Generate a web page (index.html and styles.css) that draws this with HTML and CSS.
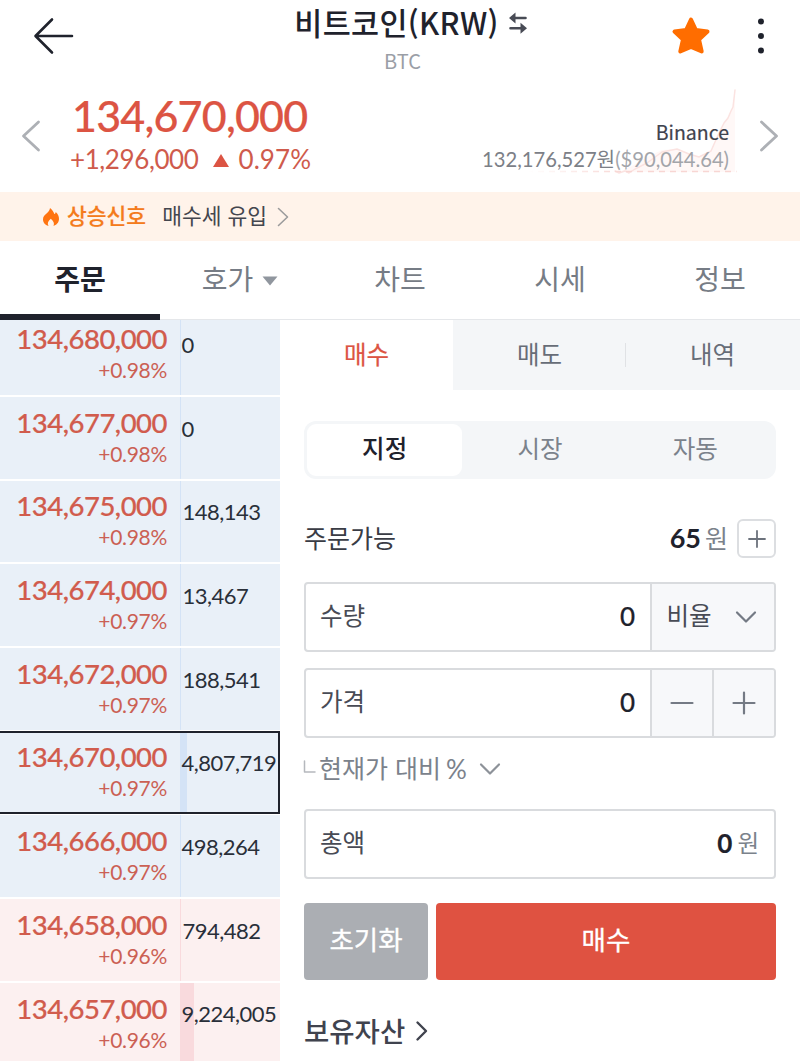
FILE: index.html
```
<!DOCTYPE html>
<html lang="ko">
<head>
<meta charset="utf-8">
<title>비트코인(KRW)</title>
<link rel="stylesheet" href="styles.css">
</head>
<body>
<div class="app">
  <header class="topbar">
    <svg class="back" width="40" height="36" viewBox="0 0 40 36"><path d="M18 1.500 1.500 18l16.500 16.500M2 18H38"/></svg>
    <div class="heading">
      <h1 class="title"><span>비트코인(KRW)</span><svg class="swap" width="18" height="22" viewBox="0 0 18 22"><path class="line" d="M5 6H16.500M1.500 16.300H13"/><path class="tip" d="M0 6 6.500.500V11.500ZM18 16.300 11.500 10.800V21.800Z"/></svg></h1>
      <div class="symbol">BTC</div>
    </div>
    <div class="actions">
      <svg width="38" height="38" viewBox="0 0 38 38"><path class="star" d="M19 2.500 23.900 13.100 35.500 14.500 27 22.500 29.700 34.500 19 30 8.300 34.500 11 22.500 2.500 14.500 14.100 13.100Z"/></svg>
      <svg width="8" height="38" viewBox="0 0 8 38"><circle cx="4" cy="4.500" r="3"/><circle cx="4" cy="19" r="3"/><circle cx="4" cy="33.500" r="3"/></svg>
    </div>
  </header>

  <section class="quote">
    <svg class="prev" width="20" height="32" viewBox="0 0 20 32"><path d="M17.500 2 2.500 16l15 14"/></svg>
    <div class="now">
      <div class="now-price">134,670,000</div>
      <div class="now-change"><span>+1,296,000</span><svg width="16" height="13" viewBox="0 0 16 13"><path d="M8 0 16 13H0Z"/></svg><span>0.97%</span></div>
    </div>
    <div class="world">
      <svg class="spark" width="230" height="90" viewBox="0 0 230 90"><defs><linearGradient id="fade" gradientUnits="userSpaceOnUse" x1="20" y1="0" x2="120" y2="0"><stop offset="0" stop-color="#f8d6d3" stop-opacity="0"/><stop offset="1" stop-color="#f8d6d3"/></linearGradient></defs><path class="area" d="M112 83 125 77 140 68 155 61 170 60 182 65 192 68 204 62 208 53 213 42 217 34 221 29 224 22 226 18 228 1V83Z"/><path class="curve" d="M108 82 112 84 118 82 122 84 128 80 140 74 155 63 170 60 182 65 192 68 204 62 208 53 213 42 217 34 221 29 224 22 226 18 228 1"/><path class="base" d="M20 82.500H229.500"/></svg>
      <div class="world-name">Binance</div>
      <div class="world-price">132,176,527원<span>($90,044.64)</span></div>
    </div>
    <svg class="next" width="20" height="32" viewBox="0 0 20 32"><path d="M2.500 2l15 14-15 14"/></svg>
  </section>

  <div class="signal">
    <svg class="fire" width="18" height="18" viewBox="0 0 18 18"><path d="M8 0C10 1.500 11.600 3.500 12.300 6 13.300 5.600 13.700 4.800 13.700 4 16 6 17 8.400 17 11 17 14.800 14 17.200 11.500 18 12.700 15.500 11.500 13 8.800 10.800 6 13 5 15.500 6.500 18 3 17.200 1 14.500 1 11.300 1 8.200 3 7 4.800 5.200 6.800 3.400 7.700 2 8 0Z"/></svg>
    <strong>상승신호</strong>
    <span>매수세 유입</span>
    <svg class="more" width="12" height="20" viewBox="0 0 12 20"><path d="M1.500 1.500l9 8.500-9 8.500"/></svg>
  </div>

  <nav class="tabs">
    <a class="tab on"><span>주문</span></a>
    <a class="tab"><span>호가</span><svg width="16" height="10" viewBox="0 0 16 10"><path d="M.500.500H15.500L8 9.500Z"/></svg></a>
    <a class="tab"><span>차트</span></a>
    <a class="tab"><span>시세</span></a>
    <a class="tab"><span>정보</span></a>
  </nav>

  <main class="body">
    <div class="book">
      <div class="row first"><div class="ask"><b>134,680,000</b><i>+0.98%</i></div><div class="vol zero">0</div></div>
      <div class="row"><div class="ask"><b>134,677,000</b><i>+0.98%</i></div><div class="vol zero">0</div></div>
      <div class="row"><div class="ask"><b>134,675,000</b><i>+0.98%</i></div><div class="vol">148,143</div></div>
      <div class="row"><div class="ask"><b>134,674,000</b><i>+0.97%</i></div><div class="vol">13,467</div></div>
      <div class="row"><div class="ask"><b>134,672,000</b><i>+0.97%</i></div><div class="vol">188,541</div></div>
      <div class="row current"><div class="ask"><b>134,670,000</b><i>+0.97%</i></div><div class="vol wide" style="--depth:7px">4,807,719</div></div>
      <div class="row"><div class="ask"><b>134,666,000</b><i>+0.97%</i></div><div class="vol wide">498,264</div></div>
      <div class="row bid"><div class="ask"><b>134,658,000</b><i>+0.96%</i></div><div class="vol">794,482</div></div>
      <div class="row bid"><div class="ask"><b>134,657,000</b><i>+0.96%</i></div><div class="vol wide" style="--depth:14px">9,224,005</div></div>
    </div>

    <section class="trade">
      <div class="sides">
        <a class="side on">매수</a>
        <a class="side split">매도</a>
        <a class="side">내역</a>
      </div>
      <div class="form">
        <div class="kinds"><a class="kind on">지정</a><a class="kind">시장</a><a class="kind">자동</a></div>
        <div class="avail">
          <span class="avail-label">주문가능</span>
          <b>65</b><span class="unit">원</span>
          <button class="add"><svg width="16" height="16" viewBox="0 0 16 16"><path d="M8 0V16M0 8H16"/></svg></button>
        </div>
        <div class="field">
          <div class="entry"><label>수량</label><b>0</b></div>
          <div class="side-box ratio"><span>비율</span><svg width="20" height="13" viewBox="0 0 20 13"><path d="M1 1.500l9 9 9-9"/></svg></div>
        </div>
        <div class="field">
          <div class="entry"><label>가격</label><b>0</b></div>
          <div class="side-box step"><svg width="24" height="24" viewBox="0 0 24 24"><path d="M1.500 12H22.500"/></svg></div>
          <div class="side-box step"><svg width="24" height="24" viewBox="0 0 24 24"><path d="M1.500 12H22.500M12 1.500V22.500"/></svg></div>
        </div>
        <div class="percent"><svg class="branch" width="12" height="12" viewBox="0 0 12 12"><path d="M.500 0V11H11"/></svg><span>현재가 대비</span><em>%</em><svg class="down" width="20" height="13" viewBox="0 0 20 13"><path d="M1 1.500l9 9 9-9"/></svg></div>
        <div class="field">
          <div class="entry total"><label>총액</label><b>0</b><span class="unit">원</span></div>
        </div>
        <div class="buttons"><button class="reset">초기화</button><button class="buy">매수</button></div>
        <div class="assets"><span>보유자산</span><svg width="12" height="20" viewBox="0 0 12 20"><path d="M1.500 1.500l8.500 8.500-8.500 8.500"/></svg></div>
      </div>
    </section>
  </main>
</div>
</body>
</html>
```

FILE: styles.css
```
* { box-sizing: border-box; margin: 0; padding: 0; }
body { background: #fff; color: #1f222c; font-family: Lato, "Noto Sans CJK KR", sans-serif; }
svg { flex: none; display: block; fill: none; stroke-linecap: round; stroke-linejoin: round; overflow: visible; }
button { border: 0; font-family: inherit; }
.app { width: 800px; height: 1061px; overflow: hidden; display: flex; flex-direction: column; }

.topbar { height: 88px; display: grid; grid-template-columns: 160px 1fr 160px; flex: none; }
.back { margin: 18px 0 0 34px; stroke: #1f222c; stroke-width: 2.6; }
.heading { display: flex; flex-direction: column; align-items: center; }
.title { display: flex; align-items: center; gap: 10px; height: 44px; padding-left: 21px; font: 500 30.500px/44px "Noto Sans CJK KR", sans-serif; letter-spacing: .3px; white-space: nowrap; }
.swap { margin-top: 2px; }
.swap .line { stroke: #484b55; stroke-width: 2.6; }
.swap .tip { fill: #484b55; }
.symbol { font: 400 20px/34px "Noto Sans CJK KR", sans-serif; color: #9a9ea6; padding-left: 5px; }
.actions { display: flex; gap: 47px; padding: 17px 0 0 32px; }
.actions circle { fill: #1f222c; }
.star { fill: #ff6d00; stroke: #ff6d00; stroke-width: 4; }

.quote { height: 104px; flex: none; display: flex; }
.prev, .next { stroke: #adb0b5; stroke-width: 2.800; margin-top: 32px; }
.prev { margin-left: 21px; }
.next { margin: 32px 21px 0 22px; }
.now { margin-left: 31px; width: 260px; color: #dc5443; }
.now-price { font-size: 43px; font-weight: 500; line-height: 55px; letter-spacing: -.8px; -webkit-text-stroke: .2px #dc5443; white-space: nowrap; }
.now-change { display: flex; align-items: center; font-size: 26px; line-height: 32px; color: #cf5b4c; margin: 0 0 0 -2px; letter-spacing: -.4px; white-space: nowrap; }
.now-change svg { fill: #dc5443; margin: 2px 9px 0 15px; }
.now-change span:last-child { letter-spacing: .1px; }
.world { position: relative; flex: 1; padding: 30px 8px 0 0; text-align: right; font-family: "Noto Sans CJK KR", sans-serif; }
.spark { position: absolute; right: 0; top: 1px; }
.spark .area { fill: #fff8f7; }
.spark .curve { stroke: #fbe3e1; stroke-width: 1.5; }
.spark .base { stroke: url(#fade); stroke-width: 1.5; stroke-dasharray: 6 5; stroke-linecap: butt; }
.world-name { position: relative; font-size: 19.500px; line-height: 28px; color: #40434e; -webkit-text-stroke: .2px #40434e; }
.world-price { position: relative; font-family: Lato, "Noto Sans CJK KR", sans-serif; font-size: 20.200px; line-height: 26px; color: #7c8087; white-space: nowrap; }
.world-price span { color: #a3a5aa; }

.signal { height: 49px; flex: none; background: #fff3ea; display: flex; align-items: center; padding-left: 42px; font: 400 21.500px/45px "Noto Sans CJK KR", sans-serif; color: #44464e; }
.signal strong, .signal span { padding-bottom: 4px; }
.fire { fill: #ff7411; }
.signal strong { font-weight: 500; color: #f47b1c; -webkit-text-stroke: .2px #f47b1c; margin: 0 16px 0 7px; }
.more { margin-left: 10px; stroke: #9b9b9c; stroke-width: 1.600; }

.tabs { height: 79px; flex: none; border-bottom: 1px solid #e5e7ea; display: grid; grid-template-columns: repeat(5, 1fr); font: 400 28px/74px "Noto Sans CJK KR", sans-serif; color: #767c85; }
.tab { display: flex; justify-content: center; align-items: center; height: 79px; }
.tab span { padding-bottom: 5px; }
.tab.on { font-weight: 700; color: #1f222c; border-bottom: 6px solid #1f222c; padding-top: 6px; }
.tab svg { margin: 0 0 0 9px; fill: #90969e; }

.body { flex: 1; display: flex; min-height: 0; }
.book { width: 280px; flex: none; overflow: hidden; }
.row { height: 81.700px; margin-bottom: 2px; background: #e9f0f8; display: flex; align-items: flex-end; }
.row.first { height: 75px; }
.ask { width: 180px; height: 75px; padding-right: 13px; text-align: right; display: flex; flex-direction: column; }
.ask b { font-weight: 500; font-size: 27.500px; line-height: 38px; letter-spacing: -.5px; color: #d15c4d; -webkit-text-stroke: .2px #d15c4d; }
.ask i { font-style: normal; font-size: 21px; line-height: 24px; letter-spacing: -.3px; color: #cb6054; }
.row.first .vol { height: 75px; padding-top: 9px; }
.vol { --depth: 1px; width: 100px; align-self: stretch; padding: 15.500px 0 0 2.500px; font-size: 22px; line-height: 32px; letter-spacing: -.5px; color: #292f39; background: linear-gradient(#d4e3f6, #d4e3f6) left / var(--depth) 100% no-repeat; white-space: nowrap; }
.vol.zero, .vol.wide { padding-left: 1.500px; }
.row.current { position: relative; height: 83.700px; margin-top: -1px; margin-bottom: 1px; padding-bottom: 1px; }
.row.current .vol { padding-top: 16px; }
.row.current::after { content: ""; position: absolute; inset: 0 0 0 -2px; border: 2px solid #1f222c; }
.row.bid { background: #fcf0f0; }
.row.bid .vol { background-image: linear-gradient(#f9dadd, #f9dadd); }

.trade { flex: 1; font-family: "Noto Sans CJK KR", sans-serif; }
.sides { display: flex; height: 70px; background: #f4f6f8; font-size: 24.500px; line-height: 67px; text-align: center; color: #676d77; }
.side { width: 173px; }
.side.on { background: #fff; color: #dc5443; -webkit-text-stroke: .2px #dc5443; }
.side.split { background: linear-gradient(#e0e2e5, #e0e2e5) right 50% / 1px 24px no-repeat; }
.form { padding: 31px 24px 0; }
.kinds { display: flex; height: 58px; padding: 3px; border-radius: 12px; background: #f4f6f8; font-size: 24.500px; line-height: 48px; text-align: center; color: #7b828b; }
.kind { flex: 1; border-radius: 9px; }
.kind.on { background: #fff; color: #1f222c; font-weight: 500; }
.avail { height: 39px; margin-top: 40px; display: flex; align-items: center; font-size: 25px; line-height: 36px; }
.avail-label { margin-right: auto; color: #393c45; padding-bottom: 4px; }
.avail b, .entry b { font-family: Lato, sans-serif; font-weight: 700; font-size: 27px; letter-spacing: 0; color: #1f222c; padding-bottom: 2px; }
.unit { margin-left: 4px; color: #7b828b; font-size: 25px; padding-bottom: 4px; }
.add { width: 39px; height: 39px; margin-left: 9px; border: 2px solid #dcdee1; border-radius: 6px; background: #fff; display: grid; place-items: center; }
.add svg { stroke: #6c727c; stroke-width: 1.800; }
.field { display: flex; height: 70px; border: 2px solid #d9dbde; border-radius: 4px; margin-top: 16px; overflow: hidden; }
.avail + .field { margin-top: 24px; }
.entry { flex: 1; display: flex; align-items: center; padding: 0 15px 0 14px; font-size: 24.500px; line-height: 36px; }
.entry label { margin-right: auto; color: #484b55; padding-bottom: 4px; }
.entry b { font-size: 26px; font-weight: 500; -webkit-text-stroke: .2px #1f222c; }
.entry.total b { font-weight: 700; }
.entry.total .unit { font-size: 23.500px; margin-left: 5px; }
.side-box { border-left: 2px solid #d9dbde; background: #f7f8fa; display: flex; align-items: center; justify-content: center; width: 62px; color: #484b55; font-size: 24.500px; line-height: 36px; }
.side-box svg { stroke: #747a84; stroke-width: 2.200; }
.side-box.ratio { width: 124px; gap: 24px; padding-right: 4px; }
.side-box span { padding-bottom: 4px; }
.percent { height: 71px; display: flex; align-items: center; padding-bottom: 9px; font-size: 25px; line-height: 36px; color: #7b828b; }
.percent span { padding-bottom: 4px; }
.percent .branch { stroke: #b5b8bd; stroke-width: 1.500; margin: -4px 3px 0 0; }
.percent em { font-style: normal; font-family: Lato, sans-serif; margin-left: 5px; font-size: 26px; }
.percent .down { stroke: #8d9299; stroke-width: 2.200; margin-left: 13px; }
.percent + .field { margin-top: 0; }
.buttons { display: flex; gap: 8px; margin-top: 24px; height: 77px; }
.buttons button { border-radius: 4px; color: #fff; font-size: 26.500px; line-height: 72px; padding-bottom: 5px; -webkit-text-stroke: .3px #fff; }
.reset { width: 124px; background: #abaeb3; }
.buy { flex: 1; background: #df5241; }
.assets { display: flex; align-items: center; gap: 11px; height: 40px; margin-top: 31px; font-size: 27.500px; font-weight: 500; line-height: 40px; color: #40434e; }
.assets span { padding-bottom: 3px; }
.assets svg { stroke: #40434e; stroke-width: 2.400; }
```
